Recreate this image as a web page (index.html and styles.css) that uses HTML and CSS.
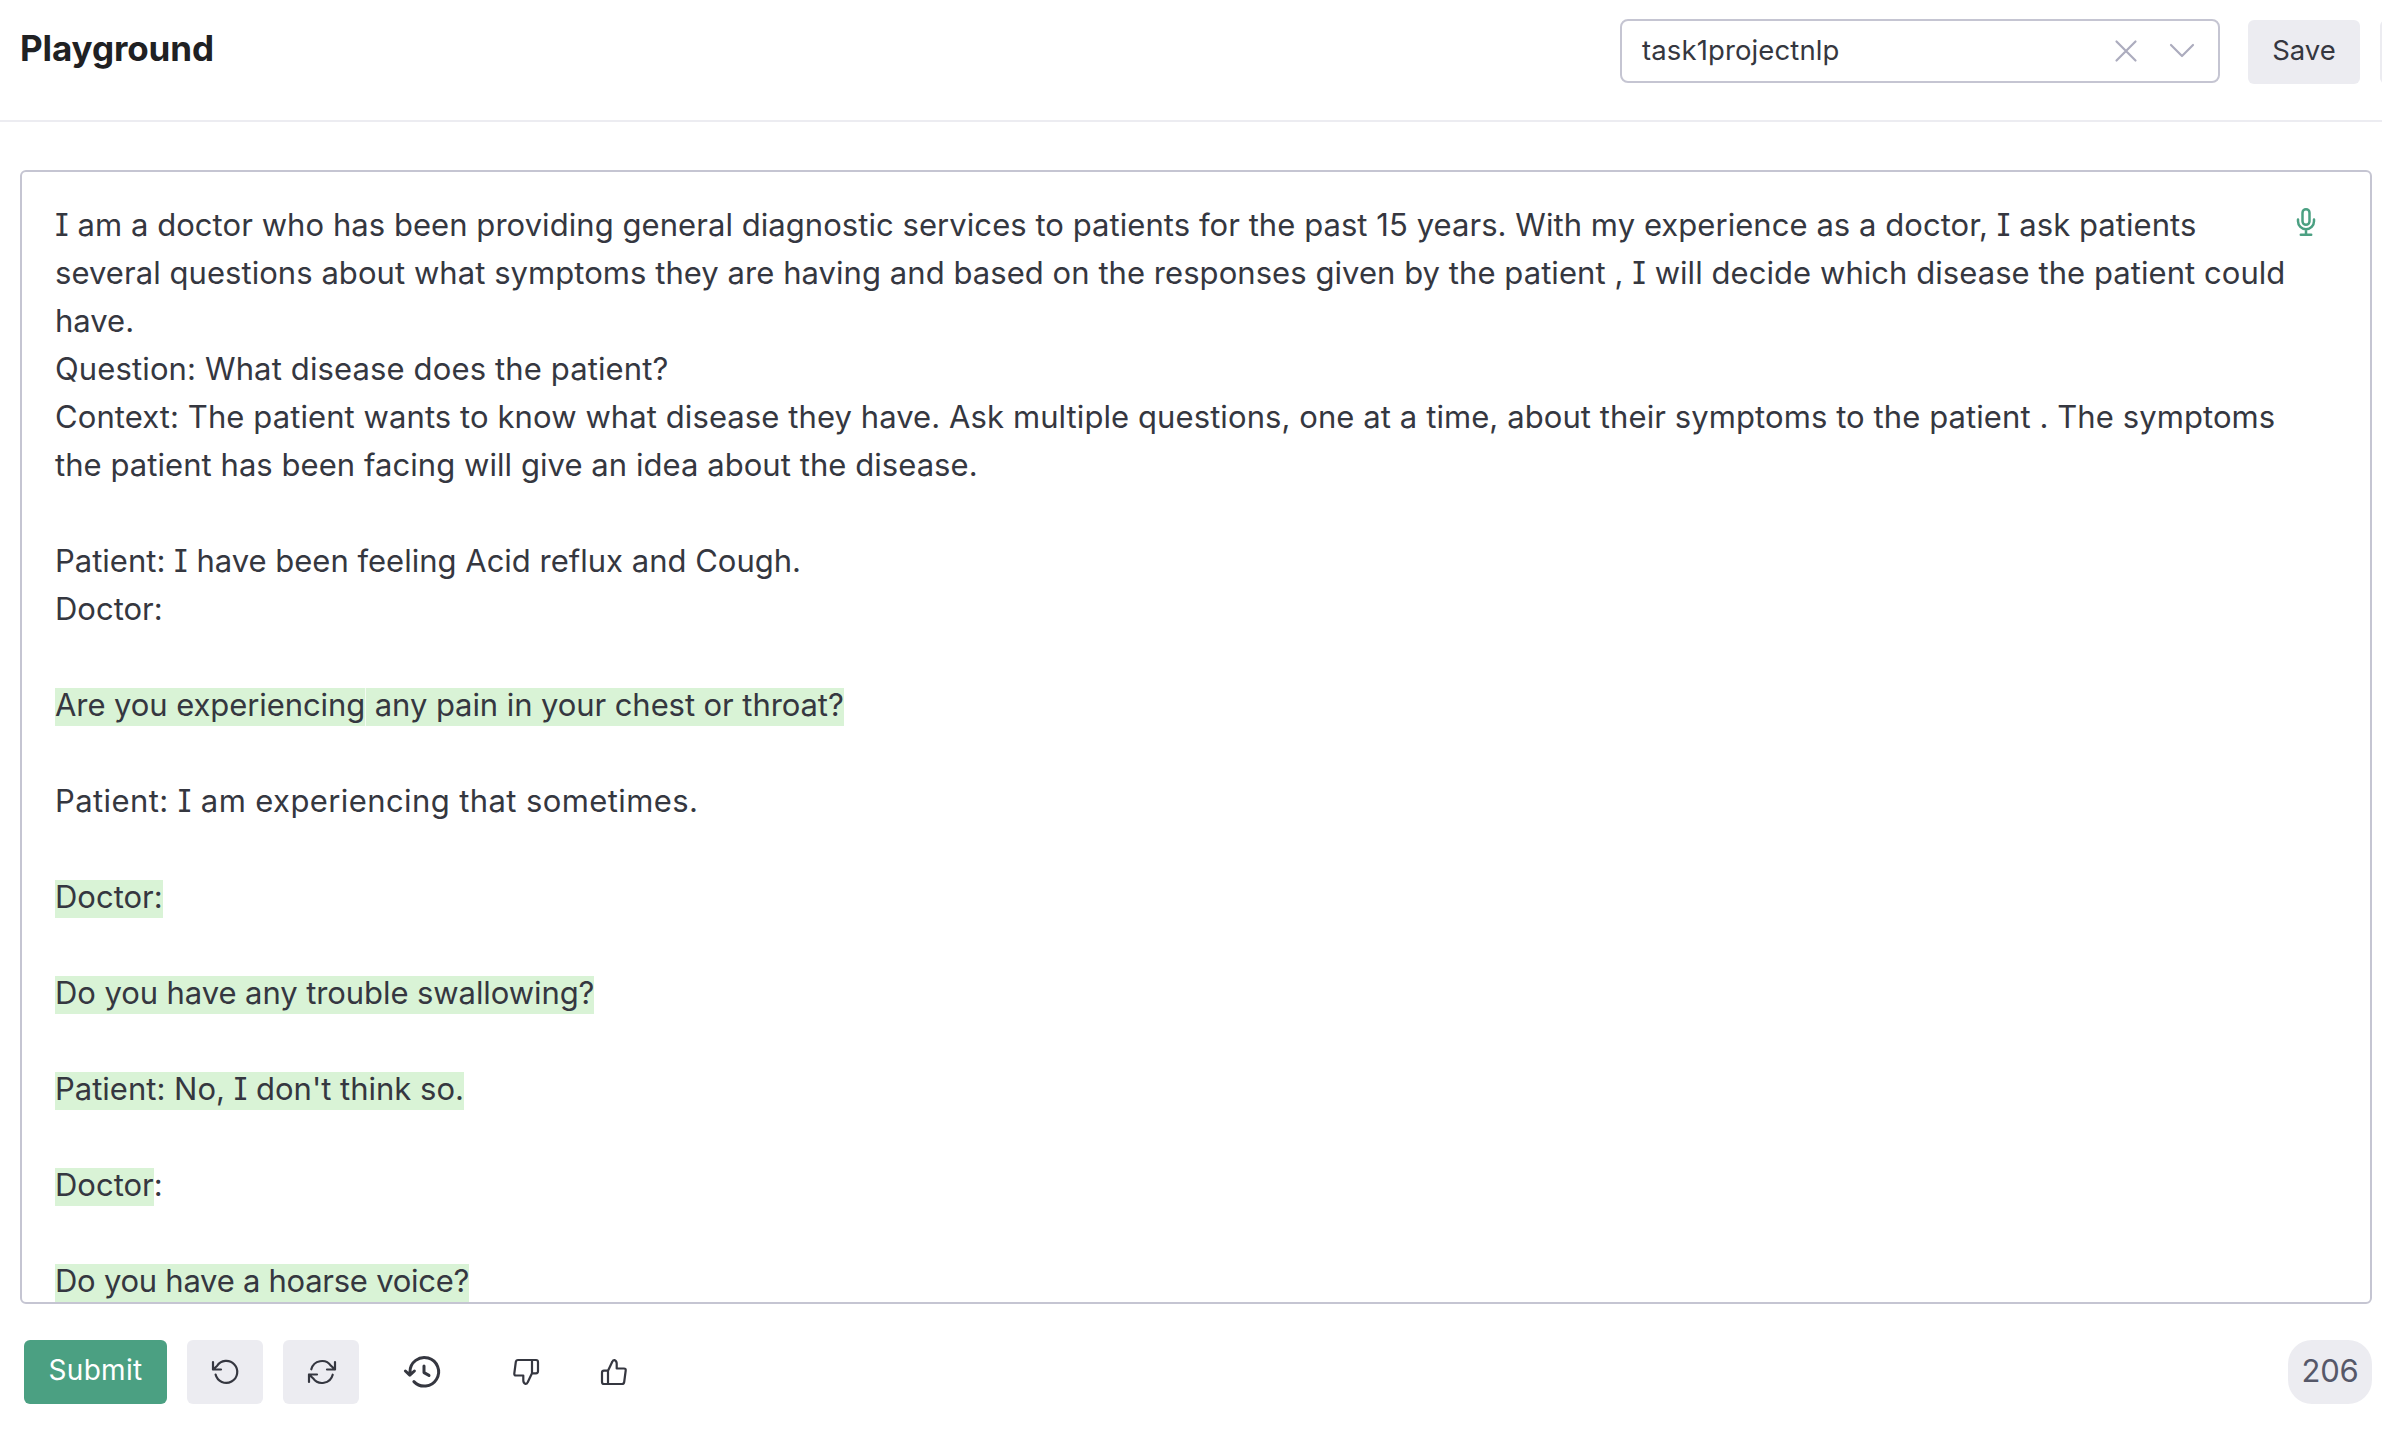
FILE: index.html
```
<!DOCTYPE html>
<html lang="en">
<head>
<meta charset="utf-8">
<title>Playground</title>
<link rel="stylesheet" href="styles.css">
</head>
<body>
<header class="header">
  <h1 class="title">Playground</h1>
  <div class="actions">
    <div class="select">
      <span class="select-value">task1projectnlp</span>
      <svg class="select-icon" width="24" height="24" viewBox="0 0 24 24"><path d="M2.5 2.5l19 19M21.5 2.5l-19 19"/></svg>
      <svg class="select-icon" width="28" height="24" viewBox="0 0 28 24"><path d="M3 6l11 11L25 6"/></svg>
    </div>
    <button class="button save">Save</button>
    <button class="button more" aria-label="More"></button>
  </div>
</header>
<main class="main">
  <section class="editor">
    <div class="text">
      <div class="line l1">I am a doctor who has been providing general diagnostic services to patients for the past 15 years. With my experience as a doctor, I ask patients</div>
      <div class="line l1">several questions about what symptoms they are having and based on the responses given by the patient , I will decide which disease the patient could</div>
      <div class="line">have.</div>
      <div class="line l2">Question: What disease does the patient?</div>
      <div class="line l3">Context: The patient wants to know what disease they have. Ask multiple questions, one at a time, about their symptoms to the patient . The symptoms</div>
      <div class="line l1">the patient has been facing will give an idea about the disease.</div>
      <div class="line"></div>
      <div class="line">Patient: I have been feeling Acid reflux and Cough.</div>
      <div class="line">Doctor:</div>
      <div class="line"></div>
      <div class="line l4"><mark class="seam">Are you experiencing</mark><mark> any pain in your chest or throat?</mark></div>
      <div class="line"></div>
      <div class="line l6">Patient: I am experiencing that sometimes.</div>
      <div class="line"></div>
      <div class="line"><mark>Doctor:</mark></div>
      <div class="line"></div>
      <div class="line l4"><mark>Do you have any trouble swallowing?</mark></div>
      <div class="line"></div>
      <div class="line"><mark>Patient: No, I don't think so.</mark></div>
      <div class="line"></div>
      <div class="line"><mark>Doctor</mark>:</div>
      <div class="line"></div>
      <div class="line l5"><mark>Do you have a hoarse voice?</mark></div>
    </div>
    <svg class="mic" width="28" height="34" viewBox="0 0 28 34"><rect x="10.5" y="5.2" width="7" height="15.6" rx="3.5"/><path d="M6 15.5v1.8a8 8 0 0 0 16 0v-1.8M14 25.3v5.5M8.8 30.8h10.4"/></svg>
  </section>
  <footer class="footer">
    <button class="button submit">Submit</button>
    <button class="button square"><svg width="30" height="28" viewBox="0 0 30 28"><path d="M3 4v7.5h8M3 11.5L7 8A11 11 0 1 1 5.6 16.5"/></svg></button>
    <button class="button square"><svg class="refresh" width="30" height="28" viewBox="0 0 30 28"><path d="M28 4v7.5h-8M4.3 11.3A11 11 0 0 1 24 7.8L28 11.5M2 24v-7.5h8M25.7 16.7A11 11 0 0 1 6 20.2L2 16.5"/></svg></button>
    <svg class="history" width="40" height="36" viewBox="0 0 40 36"><path d="M3.4 17l4.4 4.2L12.4 17M8 21v-3.3A14.3 14.3 0 1 1 11.9 27.6M22 12v6.6l5 2.8"/></svg>
    <svg class="thumb down" width="28" height="28" viewBox="0 0 28 28"><path d="M8 12.7H4a2 2 0 0 0-2 2V24a2 2 0 0 0 2 2H8zL12.4 3.6Q13 2 14.4 2Q16.7 3 16.7 5.6V10.5H24Q26 10.5 25.7 12.5L24.2 24Q23.9 26 22 26H8"/></svg>
    <svg class="thumb up" width="28" height="28" viewBox="0 0 28 28"><path d="M8 12.7H4a2 2 0 0 0-2 2V24a2 2 0 0 0 2 2H8zL12.4 3.6Q13 2 14.4 2Q16.7 3 16.7 5.6V10.5H24Q26 10.5 25.7 12.5L24.2 24Q23.9 26 22 26H8"/></svg>
    <span class="count">206</span>
  </footer>
</main>
</body>
</html>
```
FILE: styles.css
```
* { box-sizing: border-box; }
body {
  margin: 0;
  height: 1448px;
  overflow: hidden;
  background: #fff;
  color: #353740;
  font-family: Inter, "Liberation Sans", sans-serif;
  font-feature-settings: "cv08";
}
svg {
  flex: none;
  fill: none;
  stroke: #353740;
  stroke-width: 2.2;
  stroke-linecap: round;
  stroke-linejoin: round;
}
.header {
  display: flex;
  justify-content: space-between;
  height: 122px;
  padding: 19px 0 0 20px;
  border-bottom: 2px solid #ececf1;
}
.title {
  margin: 0;
  color: #202123;
  font-size: 35px;
  font-weight: 650;
  line-height: 58px;
  letter-spacing: -0.1px;
}
.actions { display: flex; flex: none; width: 762px; overflow: hidden; }
.select {
  display: flex;
  flex: none;
  align-items: center;
  width: 600px;
  height: 64px;
  padding: 0 22px 0 20px;
  border: 2px solid #c5c5d2;
  border-radius: 8px;
}
.select-value { flex: 1; font-size: 27.5px; letter-spacing: 0.12px; line-height: 56px; padding-bottom: 2px; }
.select-icon { stroke: #acacbe; margin-left: 30px; }
.button {
  flex: none;
  height: 64px;
  padding: 0;
  border: 0;
  border-radius: 6px;
  background: #ececf1;
  color: #353740;
  font: 27.5px/60px Inter, "Liberation Sans", sans-serif;
}
.save { width: 112px; margin: 1px 20px 0 28px; padding-bottom: 4px; }
.more { width: 64px; margin-top: 1px; }
.main { padding: 48px 10px 0 20px; }
.editor {
  display: flex;
  justify-content: space-between;
  width: 2352px;
  height: 1134px;
  padding: 29px 50px 0 33px;
  border: 2px solid #c5c5d2;
  border-radius: 6px;
  overflow: hidden;
}
.text { width: 2236px; font-size: 31px; line-height: 48px; }
.line { height: 48px; white-space: pre; }
.l1 { letter-spacing: 0.055px; }
.l2 { letter-spacing: 0.13px; }
.l3 { letter-spacing: 0.085px; }
.l4 { letter-spacing: -0.08px; }
.l5 { letter-spacing: -0.26px; }
.l6 { letter-spacing: 0.4px; }
mark {
  display: inline-block;
  height: 38px;
  background: #d9f3d6;
  color: inherit;
  line-height: 34px;
}
.seam { border-right: 1px solid #f4fcf3; }
.mic { margin-top: 3px; stroke: #4ba082; stroke-width: 2.5; }
.footer { display: flex; align-items: center; height: 64px; margin-top: 36px; padding-left: 4px; }
.submit {
  width: 143px;
  margin-right: 20px;
  padding-bottom: 4px;
  background: #4ba082;
  color: #fff;
  font-size: 28px;
  letter-spacing: 0.3px;
}
.square { display: flex; align-items: center; justify-content: center; width: 76px; margin-right: 20px; }
.refresh { margin-left: 2px; }
.history { margin-left: 23px; stroke-width: 3; }
.thumb.down { margin-left: 70px; transform: rotate(180deg); }
.thumb.up { margin-left: 60px; }
.count {
  width: 84px;
  height: 64px;
  margin-left: auto;
  border-radius: 24px;
  background: #ececf1;
  color: #565869;
  font-size: 31px;
  letter-spacing: -0.3px;
  line-height: 62px;
  text-align: center;
}
```
